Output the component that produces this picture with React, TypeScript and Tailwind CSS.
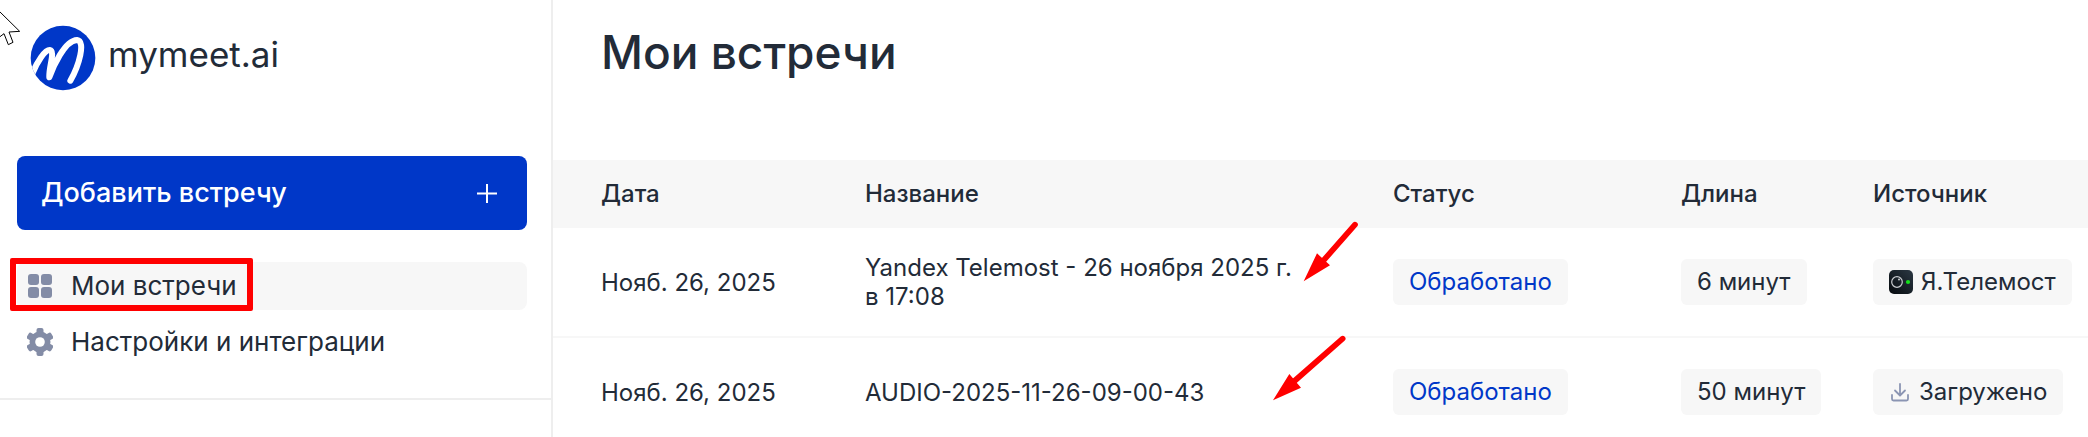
import type { ReactNode } from 'react';

type Meeting = {
  id: number;
  date: string;
  title: string;
  status: string;
  duration: string;
  source: string;
  icon: ReactNode;
};

function Logo() {
  return (
    <svg width="66" height="66" viewBox="0 0 198 198" className="shrink-0" aria-hidden="true">
      <defs>
        <clipPath id="logo-clip">
          <circle cx="99" cy="99" r="97" />
        </clipPath>
      </defs>
      <circle cx="99" cy="99" r="97" fill="#0037c8" />
      <path
        clipPath="url(#logo-clip)"
        d="M6 148C22 108 45 75 59 75C77 78 56 125 58 157C68 128 104 46 141 45C168 48 147 122 121 167"
        fill="none"
        stroke="#fff"
        strokeWidth="18"
        strokeLinecap="round"
        strokeLinejoin="round"
      />
    </svg>
  );
}

function GridIcon() {
  return (
    <svg width="26" height="26" viewBox="0 0 26 26" fill="#838ca6" className="shrink-0" aria-hidden="true">
      <rect x="1" y="1" width="11" height="11" rx="3" />
      <rect x="14" y="1" width="11" height="11" rx="3" />
      <rect x="1" y="14" width="11" height="11" rx="3" />
      <rect x="14" y="14" width="11" height="11" rx="3" />
    </svg>
  );
}

function GearIcon() {
  return (
    <svg width="26" height="28" viewBox="0 0 26 28" fill="#838ca6" className="shrink-0" aria-hidden="true">
      <circle cx="13" cy="14" r="10.5" />
      <rect x="9.5" y="0" width="7" height="28" rx="2" />
      <rect x="9.5" y="0" width="7" height="28" rx="2" transform="rotate(60 13 14)" />
      <rect x="9.5" y="0" width="7" height="28" rx="2" transform="rotate(120 13 14)" />
      <circle cx="13" cy="14" r="4.8" fill="#fff" />
    </svg>
  );
}

function TelemostIcon() {
  return (
    <svg width="24" height="24" viewBox="0 0 24 24" className="shrink-0" aria-hidden="true">
      <defs>
        <linearGradient id="telemost" x1="1" y1="0" x2="0" y2="1">
          <stop offset="0" stopColor="#2b3843" />
          <stop offset="1" stopColor="#05090d" />
        </linearGradient>
      </defs>
      <rect width="24" height="24" rx="5" fill="url(#telemost)" />
      <circle cx="8" cy="12" r="5.3" fill="none" stroke="#c9ccd0" strokeWidth="1.2" />
      <circle cx="10" cy="9.5" r="1" fill="#c9ccd0" />
      <circle cx="19" cy="12" r="2.1" fill="#14e21b" />
    </svg>
  );
}

function DownloadIcon() {
  return (
    <svg width="22" height="24" viewBox="0 0 22 24" fill="none" stroke="#8b95b3" strokeWidth="1.8" strokeLinecap="round" strokeLinejoin="round" className="shrink-0" aria-hidden="true">
      <path d="M11 4v11M6 10.5l5 5 5-5" />
      <path d="M3 15v4a1.5 1.5 0 0 0 1.5 1.5h13A1.5 1.5 0 0 0 19 19v-4" />
    </svg>
  );
}

const meetings: Meeting[] = [
  {
    id: 1,
    date: 'Нояб. 26, 2025',
    title: 'Yandex Telemost - 26 ноября 2025 г. в 17:08',
    status: 'Обработано',
    duration: '6 минут',
    source: 'Я.Телемост',
    icon: <TelemostIcon />,
  },
  {
    id: 2,
    date: 'Нояб. 26, 2025',
    title: 'AUDIO-2025-11-26-09-00-43',
    status: 'Обработано',
    duration: '50 минут',
    source: 'Загружено',
    icon: <DownloadIcon />,
  },
];

function Badge({ children, className = '' }: { children: ReactNode; className?: string }) {
  return (
    <span className={`inline-flex h-[46px] items-center gap-2 rounded-md bg-[#f7f7f7] px-4 align-middle leading-7 whitespace-nowrap ${className}`}>
      {children}
    </span>
  );
}

function Cell({ children, className = '' }: { children: ReactNode; className?: string }) {
  return <td className={`h-[110px] border-b-2 border-[#f7f7f7] ${className}`}>{children}</td>;
}

function Sidebar() {
  return (
    <aside className="w-[553px] shrink-0 border-r-2 border-[#eeeeee]">
      <div className="border-b-2 border-[#eeeeee] pb-8">
        <a href="#" className="flex items-start gap-3 pt-[25px] pl-[30px] text-[35px] leading-[58px]">
          <Logo />
          <span>mymeet.ai</span>
        </a>

        <div className="mt-[65px] pr-6 pl-[17px]">
          <button className="flex h-[74px] w-full items-center justify-between rounded-lg bg-[#0037c8] px-6 text-[27px] font-medium text-white">
            Добавить встречу
            <svg width="32" height="32" viewBox="0 0 32 32" stroke="currentColor" strokeWidth="2" aria-hidden="true">
              <path d="M16 7v19M6 16.5h20" />
            </svg>
          </button>

          <nav className="mt-8 flex flex-col gap-2 text-[26px] leading-8">
            <a href="#" className="relative flex h-12 items-center gap-[18px] rounded-lg bg-[#f7f7f7] pl-[10px]">
              <GridIcon />
              Мои встречи
              <span className="pointer-events-none absolute -top-1 -left-[7px] h-[53px] w-[243px] rounded-xs border-[6px] border-[#ff0000]" />
            </a>
            <a href="#" className="flex h-12 items-center gap-[18px] rounded-lg pl-[10px]">
              <GearIcon />
              Настройки и интеграции
            </a>
          </nav>
        </div>
      </div>
    </aside>
  );
}

export default function App() {
  return (
    <div className="relative flex min-h-screen overflow-hidden bg-white font-['Inter',sans-serif] text-[#222b38]">
      <Sidebar />

      <main className="min-w-0 flex-1">
        <h1 className="flex h-40 items-start pt-6 pl-12 text-[46px] leading-[56px] font-medium">Мои встречи</h1>

        <table className="w-full table-fixed border-separate border-spacing-0 text-left text-[24px] leading-[29px]">
          <thead className="bg-[#f7f7f7] leading-7">
            <tr className="h-[68px]">
              <th className="w-[312px] p-0 pl-12 font-medium">Дата</th>
              <th className="p-0 font-medium">Название</th>
              <th className="w-[288px] p-0 font-medium">Статус</th>
              <th className="w-[192px] p-0 font-medium">Длина</th>
              <th className="w-[215px] p-0 font-medium">Источник</th>
            </tr>
          </thead>
          <tbody>
            {meetings.map((m) => (
              <tr key={m.id}>
                <Cell className="pl-12">{m.date}</Cell>
                <Cell className="pr-[100px]">{m.title}</Cell>
                <Cell>
                  <Badge className="text-[#0037c8]">{m.status}</Badge>
                </Cell>
                <Cell>
                  <Badge>{m.duration}</Badge>
                </Cell>
                <Cell>
                  <Badge>
                    {m.icon}
                    {m.source}
                  </Badge>
                </Cell>
              </tr>
            ))}
          </tbody>
        </table>
      </main>

      {/* Red pointers next to the meeting titles */}
      <svg width="130" height="200" viewBox="0 0 390 600" className="pointer-events-none absolute top-[210px] right-[708px]" fill="#ff0000" aria-hidden="true">
        <path d="M315 44L220 152M278 386L130 516" stroke="#ff0000" strokeWidth="17" strokeLinecap="round" />
        <path d="M161 214L201 130L240 166zM69 571L118 492L153 533z" />
      </svg>

      {/* Mouse cursor */}
      <svg width="22" height="48" viewBox="0 0 66 144" className="pointer-events-none absolute top-0 left-0" aria-hidden="true">
        <path d="M-4 32L59 94L27 96L39 127L25 134L12 101L-4 113z" fill="#fff" stroke="#000" strokeWidth="3" />
      </svg>
    </div>
  );
}
